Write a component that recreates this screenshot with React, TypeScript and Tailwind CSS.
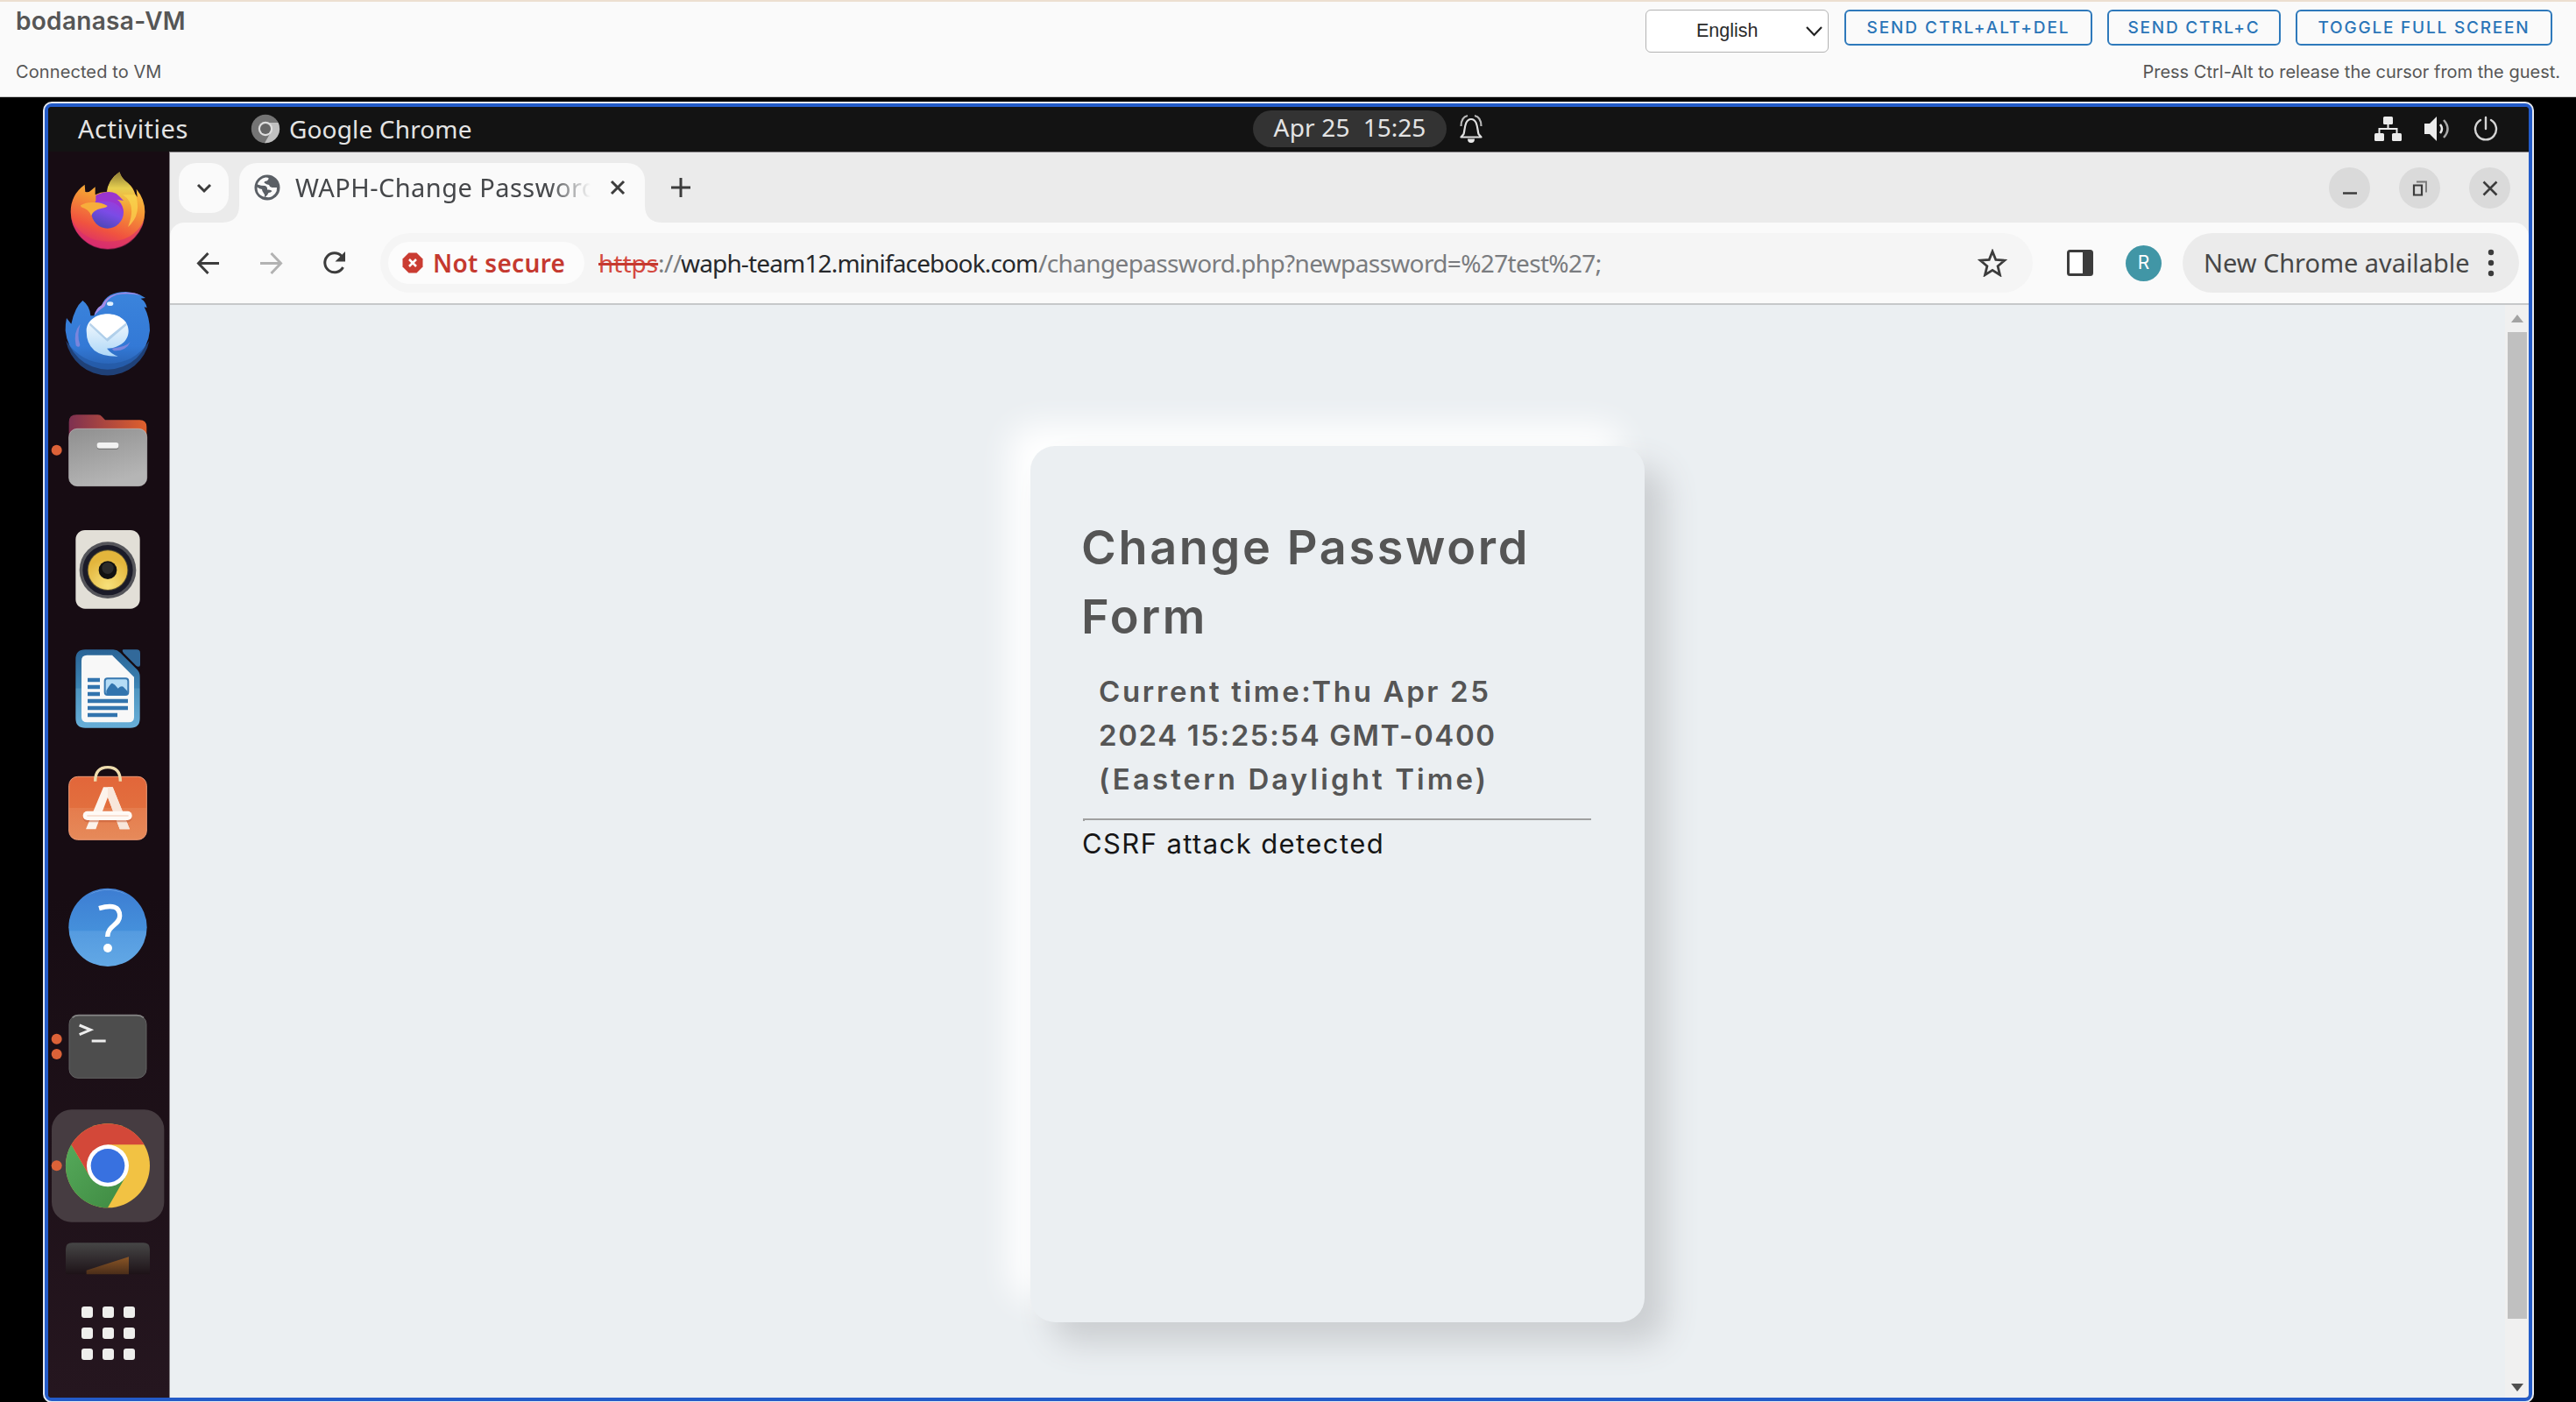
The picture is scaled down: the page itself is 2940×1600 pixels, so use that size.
import React from "react";

const ubuntu = "font-['Noto_Sans',sans-serif] whitespace-pre leading-[36px]";
const inter = "font-['Inter',sans-serif] whitespace-pre";

function HeaderButton({ label, className }: { label: string; className: string }) {
  return (
    <button className={`${inter} h-[41px] rounded-[6px] border-2 border-[#2e79bb] pt-px text-center text-[19px] leading-[36px] font-medium text-[#2a75b8] ${className}`}>
      {label}
    </button>
  );
}

function Header() {
  return (
    <header className="flex h-[111px] shrink-0 justify-between border-t-2 border-b border-t-[#ecdfd0] border-b-[#c4c4c4] bg-[#fafafa] pr-[18px] pl-[18px] text-[#565656]">
      <div className={inter}>
        <h1 className="mt-[4px] text-[28px] leading-[36px] font-semibold tracking-[0.3px]">bodanasa-VM</h1>
        <p className="mt-[26px] text-[20px] leading-[28px] tracking-[0.1px]">Connected to VM</p>
      </div>
      <div className="flex flex-col items-end">
        <div className="mt-[9px] mr-[9px] flex h-[50px] items-start">
          <div className="flex h-[49px] w-[209px] items-center justify-between rounded-[6px] border border-[#b3b3b3] bg-white pr-[6px] pl-[57px] font-['Liberation_Sans',sans-serif] text-[21.5px] text-[#2b2b2b]">
            English
            <svg width="19" height="12" viewBox="0 0 19 12" fill="none" stroke="#222" strokeWidth="2.2"><path d="M1 1l8.500 9L18 1" /></svg>
          </div>
          <HeaderButton label="SEND CTRL+ALT+DEL" className="ml-[18px] w-[283px] tracking-[1.95px]" />
          <HeaderButton label="SEND CTRL+C" className="ml-[17px] w-[198px] tracking-[1.8px]" />
          <HeaderButton label="TOGGLE FULL SCREEN" className="ml-[17px] w-[293px] tracking-[1.8px]" />
        </div>
        <p className={`${inter} mt-[7px] text-[20px] leading-[28px]`}>Press Ctrl-Alt to release the cursor from the guest.</p>
      </div>
    </header>
  );
}

function SystemBar() {
  return (
    <div className={`${ubuntu} flex h-[51px] shrink-0 items-center bg-[#131313] pb-[2px] text-[28px] text-[#e4e4e4]`}>
      <span className="ml-[34px] w-[197px] text-[29px] tracking-[0.5px]">Activities</span>
      <svg width="34" height="34" viewBox="0 0 34 34">
        <circle cx="17" cy="17" r="16.200" fill="#747474" />
        <path d="M17 10H31.500A16.200 16.200 0 0 1 16 33.200L23 21Z" fill="#c0c0c0" />
        <circle cx="17" cy="17" r="8.200" fill="#dedede" />
        <circle cx="17" cy="17" r="6" fill="#666666" />
      </svg>
      <span className="ml-[10px] w-[1100px] tracking-[0.15px]">Google Chrome</span>
      <div className="flex h-[42px] w-[221px] items-center justify-center rounded-full bg-[#333333] pb-[3px]">
        <span className="mr-[15px] tracking-[0.2px]">Apr 25</span>
        <span>15:25</span>
      </div>
      <svg className="ml-[14px]" width="28" height="34" viewBox="0 0 28 34" fill="none" stroke="#e0e0e0" strokeWidth="2.200">
        <path d="M2.500 26.500h23L22.500 23C21 18 21.500 6 14 6S7 18 5.500 23Z" strokeLinejoin="round" />
        <path d="M10 28.500h8q0 4.500-4 4.500t-4-4.500Z" fill="#e8e8e8" stroke="none" />
        <path d="M2.500 14C2.500 7 5.500 3 10 2M25.500 14C25.500 7 22.500 3 18 2" stroke="#b8b8b8" />
      </svg>
      <div className="mr-[35px] ml-auto flex items-center gap-[26px]">
        <svg width="31" height="28" viewBox="0 0 31 28" fill="#ebebeb">
          <rect x="10" y="0" width="11" height="9" rx="1.500" />
          <rect x="0" y="19" width="11" height="9" rx="1.500" />
          <rect x="20" y="19" width="11" height="9" rx="1.500" />
          <path d="M15.500 8v6M5.500 20v-6h20v6" fill="none" stroke="#ebebeb" strokeWidth="2" />
        </svg>
        <svg width="30" height="30" viewBox="0 0 30 30" fill="#ebebeb">
          <path d="M0 9h6l8-8v28l-8-8H0Z" />
          <path d="M18 10q4 5 0 10" fill="none" stroke="#ebebeb" strokeWidth="2.500" />
          <path d="M22 5q9 10 0 20" fill="none" stroke="#a8a8a8" strokeWidth="2.500" />
        </svg>
        <svg width="28" height="30" viewBox="0 0 28 30" fill="none" stroke="#d5d5d5" strokeWidth="2.400" strokeLinecap="round">
          <path d="M14 2v13M8 5a12 12 0 1 0 12 0" />
        </svg>
      </div>
    </div>
  );
}

function Slot({ y, h = 408, children }: { y: number; h?: number; children: React.ReactNode }) {
  return <svg className="block w-[138px] shrink-0" height={h / 3} viewBox={`45 ${y} 414 ${h}`}>{children}</svg>;
}

function Dock() {
  return (
    <nav className="flex w-[138px] shrink-0 flex-col bg-gradient-to-b from-[#170c13] from-60% to-[#25161f] pt-px">
      <svg className="absolute" width="0" height="0">
        <defs>
          <linearGradient id="fox" x1="0.7" y1="0" x2="0.35" y2="1"><stop offset="0" stopColor="#f8d849" /><stop offset="0.4" stopColor="#f59a35" /><stop offset="0.75" stopColor="#f0533f" /><stop offset="1" stopColor="#d92a70" /></linearGradient>
          <linearGradient id="flame" x1="0" y1="0" x2="0" y2="1"><stop offset="0" stopColor="#8c7a35" /><stop offset="0.4" stopColor="#e6cf4f" /><stop offset="1" stopColor="#f5a93a" stopOpacity="0" /></linearGradient>
          <linearGradient id="orb" x1="0.7" y1="0" x2="0.3" y2="1"><stop offset="0" stopColor="#a238d6" /><stop offset="0.5" stopColor="#7b4be6" /><stop offset="1" stopColor="#4a47b5" /></linearGradient>
          <linearGradient id="bird" x1="0" y1="0" x2="0" y2="1"><stop offset="0" stopColor="#3b84dc" /><stop offset="0.7" stopColor="#3379d6" /><stop offset="1" stopColor="#2860b0" /></linearGradient>
          <linearGradient id="mail" x1="0" y1="0" x2="0" y2="1"><stop offset="0" stopColor="#ffffff" /><stop offset="1" stopColor="#aed7f7" /></linearGradient>
          <linearGradient id="folder" x1="0" y1="0" x2="1" y2="0"><stop offset="0" stopColor="#7d3050" /><stop offset="1" stopColor="#e0602c" /></linearGradient>
          <linearGradient id="drawer" x1="0" y1="0" x2="0.4" y2="1"><stop offset="0" stopColor="#8f8f8f" /><stop offset="1" stopColor="#b5b5b5" /></linearGradient>
          <radialGradient id="cone" cx="0.5" cy="0.9" r="0.7"><stop offset="0" stopColor="#f7e07a" /><stop offset="1" stopColor="#e3b53c" /></radialGradient>
          <linearGradient id="doc" x1="0" y1="0" x2="0" y2="1"><stop offset="0" stopColor="#2a6496" /><stop offset="0.49" stopColor="#3d85b5" /><stop offset="0.5" stopColor="#4e95c0" /><stop offset="1" stopColor="#68afd9" /></linearGradient>
          <linearGradient id="bag" x1="0" y1="0" x2="0" y2="1"><stop offset="0" stopColor="#e2663a" /><stop offset="0.49" stopColor="#e26f3e" /><stop offset="0.5" stopColor="#e57c4d" /><stop offset="1" stopColor="#e68a5a" /></linearGradient>
          <linearGradient id="help" x1="0" y1="0" x2="0" y2="1"><stop offset="0" stopColor="#3d7dd2" /><stop offset="0.54" stopColor="#4590db" /><stop offset="0.55" stopColor="#559be0" /><stop offset="1" stopColor="#62a8e5" /></linearGradient>
          <linearGradient id="green" x1="0" y1="0" x2="1" y2="1"><stop offset="0" stopColor="#55a95a" /><stop offset="1" stopColor="#3f8a42" /></linearGradient>
          <linearGradient id="sublime" x1="0" y1="0" x2="0" y2="1"><stop offset="0" stopColor="#464646" /><stop offset="1" stopColor="#1d1217" /></linearGradient>
          <linearGradient id="amber" x1="0" y1="0" x2="0" y2="1"><stop offset="0" stopColor="#8a5626" /><stop offset="1" stopColor="#4a2d19" /></linearGradient>
        </defs>
      </svg>

      <Slot y={45}>
        <path d="M170 155L172 180Q184 182 190 176L206 163L206 190Q228 178 248 180Q250 138 289 112Q296 135 318 150Q336 164 344 190L350 198L347 170Q376 205 376 248A127 127 0 0 1 122 248Q122 190 170 155Z" fill="url(#fox)" />
        <path d="M244 185Q250 138 289 112Q296 135 318 150Q350 185 350 250L300 250Z" fill="url(#flame)" />
        <path d="M124 270A127 127 0 0 0 374 275Q340 350 250 350Q160 350 124 270Z" fill="#d52c72" opacity="0.55" />
        <path d="M345 190Q366 260 318 300Q350 220 300 190Z" fill="#fbd84e" opacity="0.7" />
        <circle cx="248" cy="250" r="55" fill="url(#orb)" />
        <path d="M208 192Q250 172 278 186Q288 194 303 210L280 206Q300 225 302 250Q280 200 208 215Z" fill="#9a35cf" />
        <path d="M156 226Q176 214 200 216Q225 214 248 228Q244 234 228 236Q198 242 192 262Q186 240 158 232Z" fill="#f7ad3b" />
      </Slot>

      <Slot y={453}>
        <path d="M163 552Q188 570 190 604L202 604Q208 580 228 568Q246 522 310 522Q350 524 378 543L362 545Q380 556 383 577L374 574Q393 612 393 655A145 145 0 0 1 104 655Q104 630 108 612Q114 620 124 632Q136 575 163 552Z" fill="url(#bird)" />
        <path d="M106 690A145 145 0 0 0 391 690Q340 768 250 768Q160 768 106 690Z" fill="#2459a4" opacity="0.7" />
        <path d="M203 604Q208 580 228 568Q250 526 310 524Q345 524 362 534Q320 525 280 532Q245 545 238 572Q212 590 203 604Z" fill="#a48ae6" />
        <path d="M155 632Q130 660 140 706Q150 716 154 704Q142 670 155 632Z" fill="#7a86dd" />
        <path d="M262 716Q310 712 326 694Q312 726 270 724Z" fill="#7a86dd" />
        <path d="M248 598C290 598 320 624 320 656C320 690 290 714 246 716Q262 736 284 743Q176 745 176 656C176 624 206 598 248 598Z" fill="url(#mail)" />
        <path d="M190 626L246 682L310 626L314 636L248 692Q244 690 186 636Z" fill="#8fb8dd" opacity="0.55" />
        <path d="M188 628Q210 599 248 599Q290 599 312 628L250 678Q246 681 242 678Z" fill="#fff" />
        <ellipse cx="257" cy="563" rx="11" ry="7" fill="#dff0ff" />
      </Slot>

      <Slot y={861}>
        <path d="M116 1030V968Q116 943 142 943H215Q224 943 230 950L240 961H358Q382 961 382 985V1030Z" fill="url(#folder)" />
        <rect x="116" y="991" width="267" height="196" rx="28" fill="url(#drawer)" stroke="#c0c0c0" strokeWidth="2" />
        <rect x="212" y="1042" width="74" height="20" rx="8" fill="#777" />
        <rect x="212" y="1038" width="74" height="20" rx="8" fill="#f2f2f2" />
        <circle cx="74" cy="1064" r="18" fill="#dc6238" />
      </Slot>

      <Slot y={9}>
        <rect x="139" y="78" width="220" height="269" rx="32" fill="#e2dfd7" />
        <circle cx="249" cy="215" r="97" fill="#55555a" />
        <circle cx="249" cy="215" r="86" fill="#1b1b28" />
        <circle cx="249" cy="215" r="70" fill="#5b5230" />
        <circle cx="249" cy="215" r="67" fill="url(#cone)" />
        <circle cx="249" cy="215" r="31" fill="#111" />
        <circle cx="249" cy="208" r="20" fill="#2b2b2b" />
      </Slot>

      <Slot y={417}>
        <path d="M172 487H268Q282 488 292 498L350 556Q359 565 359 580V722Q359 755 326 755H172Q139 755 139 722V520Q139 487 172 487Z" fill="url(#doc)" />
        <path d="M178 506H264L339 581V718Q339 736 321 736H178Q159 736 159 718V525Q159 506 178 506Z" fill="#f8f8f8" />
        <path d="M296 485L362 553" stroke="#170c13" strokeWidth="14" />
        <path d="M302 487H348Q360 487 360 499V540Q358 550 346 542L303 499Q296 489 302 487Z" fill="#32699a" />
        <path d="M180 591H222M180 615H222M180 639H222M180 663H318M180 687H318M180 711H282" stroke="#3274ae" strokeWidth="13" strokeLinecap="butt" />
        <rect x="239" y="586" width="80" height="56" rx="9" fill="#b5dcf6" stroke="#3677b0" strokeWidth="6" />
        <path d="M244 640V628Q258 602 264 602Q272 604 284 620Q294 610 302 614L317 630V640Z" fill="#3274ae" />
      </Slot>

      <Slot y={825}>
        <rect x="116" y="922" width="266" height="216" rx="30" fill="url(#bag)" stroke="#ef9a75" strokeWidth="3" />
        <path d="M206 938Q206 890 249 890T292 938" fill="none" stroke="#eedcae" strokeWidth="10" />
        <path d="M234 958H266L324 1102H290L249 992L208 1102H174Z" fill="#fcf3ec" />
        <path d="M249 958H266L324 1102H290L249 992Z" fill="#f8e6da" />
        <rect x="164" y="1046" width="168" height="32" rx="16" fill="#c25a35" opacity="0.5" />
        <rect x="164" y="1040" width="168" height="31" rx="15" fill="#fffaf6" />
        <path d="M178 1056H320" stroke="#f6d9ca" strokeWidth="5" />
      </Slot>

      <Slot y={-27}>
        <circle cx="249" cy="178" r="134" fill="url(#help)" />
        <path d="M180 68A134 134 0 0 1 318 68Q249 32 180 68Z" fill="#8fb9ea" />
        <path d="M219 113Q290 92 290 139C290 170 248 172 248 210" fill="none" stroke="#fff" strokeWidth="16" />
        <circle cx="249" cy="249" r="15" fill="#fff" />
      </Slot>

      <Slot y={381}>
        <rect x="117" y="479" width="264" height="215" rx="30" fill="#4d4d4d" stroke="#626262" strokeWidth="3" />
        <path d="M128 487Q136 479 150 479H348Q362 479 372 487" fill="none" stroke="#858585" strokeWidth="5" />
        <path d="M152 513L190 529L152 545" fill="none" stroke="#eeeeee" strokeWidth="9" />
        <path d="M194 567H242" stroke="#eeeeee" strokeWidth="9" />
        <circle cx="74" cy="560" r="18" fill="#dc6238" />
        <circle cx="74" cy="612" r="18" fill="#dc6238" />
      </Slot>

      <Slot y={39}>
        <rect x="57" y="52" width="385" height="385" rx="68" fill="#463c41" />
        <circle cx="249" cy="244" r="144" fill="#f2c243" />
        <path d="M124 172A144 144 0 0 0 249 388L311 280L187 280Z" fill="url(#green)" />
        <path d="M124 172A144 144 0 0 1 374 172H249L187 280Z" fill="#d34839" />
        <circle cx="249" cy="244" r="72" fill="#fff" />
        <circle cx="249" cy="244" r="58" fill="#3871e0" />
        <circle cx="74" cy="244" r="18" fill="#dc6238" />
      </Slot>

      <Slot y={447} h={192}>
        <path d="M105 616V530Q105 508 127 508H371Q393 508 393 530V616Z" fill="url(#sublime)" />
        <path d="M176 616V602L321 556V616Z" fill="url(#amber)" />
      </Slot>

      <div className="mt-[29px] -ml-[2px] grid grid-cols-[repeat(3,13px)] justify-center gap-[11px]">
        {Array.from({ length: 9 }, (_, i) => <span key={i} className="size-[13px] rounded-[3px] bg-[#eeeeec]" />)}
      </div>
    </nav>
  );
}

function WindowButton({ children }: { children: React.ReactNode }) {
  return (
    <div className="flex size-[47px] items-center justify-center rounded-full bg-[#dadada]">
      <svg width="20" height="20" viewBox="0 0 20 20" fill="none" stroke="#3c3c3c" strokeWidth="2.500">{children}</svg>
    </div>
  );
}

function TabStrip() {
  return (
    <div className="flex h-[80px] shrink-0 items-end bg-[#ebebeb]">
      <div className="mb-[11px] ml-[10px] flex h-[57px] w-[57px] items-center justify-center rounded-[20px] bg-[#fafafa]">
        <svg width="18" height="12" viewBox="0 0 18 12" fill="none" stroke="#3c3c3c" strokeWidth="3"><path d="M2 2l7 7 7-7" /></svg>
      </div>
      <svg className="-ml-[8px] shrink-0" width="20" height="20" viewBox="0 0 20 20"><path d="M20 0V20H0Q20 20 20 0Z" fill="#fafafa" /></svg>
      <div className="flex h-[68px] w-[463px] items-center rounded-t-[20px] bg-[#fafafa] pb-[13px] pl-[17px]">
        <svg width="30" height="30" viewBox="0 0 30 30">
          <circle cx="15" cy="15" r="14.500" fill="#5a5f65" />
          <path d="M13 3.500Q6 5 3.800 11.500Q8 13 12.500 13Q15.500 14 15 17.500Q19 17 20.500 19Q19 21 16.500 21Q15.500 24 12.500 25.500Q19 28 24 22Q26.500 18.500 26 15L20.500 15Q17.500 14.500 17 12Q14 11.500 11.500 9.500Q11.500 7.500 14.500 7.500Q17 6 16.500 4Q15 3.300 13 3.500ZM3.600 14.500Q3 20 7 23.500Q9.500 25.500 12 25.800Q12.500 23 11 21.500Q9 19.500 9 17Q6 16.500 3.600 14.500Z" fill="#fafafa" />
        </svg>
        <div className={`${ubuntu} ml-[17px] w-[337px] overflow-hidden text-[29px] tracking-[0.45px] text-[#45474a] [mask-image:linear-gradient(to_right,black_86%,transparent_100%)]`}>WAPH-Change Password</div>
        <svg className="ml-[22px]" width="18" height="18" viewBox="0 0 18 18" fill="none" stroke="#3c3c3c" strokeWidth="3"><path d="M2 2l14 14M16 2L2 16" /></svg>
      </div>
      <svg className="shrink-0" width="20" height="20" viewBox="0 0 20 20"><path d="M0 0V20H20Q0 20 0 0Z" fill="#fafafa" /></svg>
      <svg className="mb-[28px] ml-[9px]" width="24" height="24" viewBox="0 0 24 24" fill="none" stroke="#3c3c3c" strokeWidth="3"><path d="M12 1v22M1 12h22" /></svg>
      <div className="mr-[21px] mb-[16px] ml-auto flex gap-[33px]">
        <WindowButton><path d="M2 15.500h16" /></WindowButton>
        <WindowButton><path d="M3 6.500h9v11H3Z" strokeWidth="2.200" /><path d="M6 2.500h11v12" strokeWidth="1.800" stroke="#777" /></WindowButton>
        <WindowButton><path d="M2.500 2.500l15 15M17.500 2.500l-15 15" /></WindowButton>
      </div>
    </div>
  );
}

function Toolbar() {
  return (
    <div className="shrink-0 bg-[#ebebeb]">
      <div className={`${ubuntu} flex h-[94px] items-center rounded-t-[16px] border-b-2 border-[#c6c8ca] bg-[#fafafa] text-[28px]`}>
        <svg className="ml-[30px]" width="27" height="27" viewBox="0 0 27 27" fill="none" stroke="#3c3c3c" strokeWidth="3"><path d="M13.500 2L2.500 13.500l11 11.500M3 13.500h23" /></svg>
        <svg className="ml-[45px]" width="27" height="27" viewBox="0 0 27 27" fill="none" stroke="#b2b2b2" strokeWidth="3"><path d="M13.500 2l11 11.500-11 11.500M24 13.500H1" /></svg>
        <svg className="ml-[45px]" width="28" height="28" viewBox="0 0 28 28"><path d="M23.500 19A11 11 0 1 1 22 6.500" fill="none" stroke="#3c3c3c" strokeWidth="3" /><path d="M26 1v11.500H14.500Z" fill="#3c3c3c" /></svg>
        <div className="ml-[38px] flex h-[68px] w-[1886px] items-center rounded-full bg-[#f5f5f5] pl-[9px]">
          <div className="flex h-[48px] w-[224px] items-center rounded-full bg-[#fcfcfc] pl-[16px] text-[#c5392f]">
            <svg width="24" height="24" viewBox="0 0 24 24"><path d="M7.500 0.500h9l7 7v9l-7 7h-9l-7-7v-9Z" fill="#ca3c32" /><path d="M8 8l8 8M16 8l-8 8" stroke="#fff" strokeWidth="2.500" /></svg>
            <span className="ml-[11px] font-semibold tracking-[0.3px]">Not secure</span>
          </div>
          <div className="ml-[16px] flex text-[#7a7c7f]">
            <span className="w-[68px] text-[#d4493e] line-through decoration-[#c5392f] decoration-[2.5px]">https</span>
            <span className="w-[26px] tracking-[-0.5px]">://</span>
            <span className="w-[408px] tracking-[-0.85px] text-[#26282b]">waph-team12.minifacebook.com</span>
            <span className="tracking-[-0.65px]">/changepassword.php?newpassword=%27test%27;</span>
          </div>
          <svg className="mr-[29px] ml-auto" width="34" height="32" viewBox="0 0 34 32"><path d="M17 3l3.800 9.400 10 .8-7.700 6.600 2.400 9.900L17 24.400 8.500 29.700l2.400-9.900-7.700-6.600 10-.8Z" fill="none" stroke="#3c3c3c" strokeWidth="2.800" /></svg>
        </div>
        <svg className="ml-[39px]" width="30" height="30" viewBox="0 0 30 30"><rect x="1.500" y="1.500" width="27" height="27" rx="2" fill="#fff" stroke="#3c3c3c" strokeWidth="3" /><path d="M18 1h11v28H18Z" fill="#3c3c3c" /></svg>
        <div className="ml-[37px] flex size-[41px] items-center justify-center rounded-full bg-[#4196a6] font-['Inter',sans-serif] text-[21px] text-white">R</div>
        <div className="ml-[24px] flex h-[68px] w-[384px] items-center rounded-full bg-[#ebebeb] pl-[24px] text-[#474747]">
          <span className="w-[324px] text-[29px] tracking-[-0.05px]">New Chrome available</span>
          <svg width="8" height="32" viewBox="0 0 8 32" fill="#3c3c3c"><circle cx="4" cy="4" r="3.200" /><circle cx="4" cy="16" r="3.200" /><circle cx="4" cy="28" r="3.200" /></svg>
        </div>
      </div>
    </div>
  );
}

function Page() {
  return (
    <div className="flex min-h-0 flex-1">
      <main className="flex min-w-0 flex-1 items-start justify-center overflow-hidden bg-[#ebeff2] pt-[161px]">
        <section className={`${inter} h-[1000px] w-[701px] rounded-[28px] bg-[#ebeff2] px-[59px] pt-[77px] shadow-[24px_24px_37px_#cbced1,-24px_-24px_37px_#ffffff]`}>
          <h1 className="text-[54px] leading-[78.500px] font-semibold tracking-[2.65px] text-[#555555]">
            <span className="-ml-px block">Change Password</span>
            <span className="-ml-px block">Form</span>
          </h1>
          <div className="mt-[21px] pl-[19px] text-[33px] leading-[50px] font-semibold text-[#555555]">
            <span className="block tracking-[2.650px]">Current time:Thu Apr 25</span>
            <span className="block tracking-[1.600px]">2024 15:25:54 GMT-0400</span>
            <span className="block tracking-[3.100px]">(Eastern Daylight Time)</span>
          </div>
          <div className="mt-[20px] mr-[2px] ml-px h-[3px] border-t-2 border-l-2 border-[#a0a0a0]" />
          <p className="mt-[3px] text-[31px] leading-[46px] tracking-[1.400px] text-[#161616]">CSRF attack detected</p>
        </section>
      </main>
      <div className="flex w-[27px] shrink-0 flex-col items-center bg-[#f0f0f0]">
        <svg className="mt-[11px]" width="14" height="9" viewBox="0 0 14 9"><path d="M0 9L7 0l7 9Z" fill="#a3a3a3" /></svg>
        <div className="mt-[11px] h-[1126px] w-[22px] bg-[#c0c0c0]" />
        <svg className="mt-[74px]" width="14" height="9" viewBox="0 0 14 9"><path d="M0 0h14L7 9Z" fill="#505050" /></svg>
      </div>
    </div>
  );
}

export default function App() {
  return (
    <div className="flex h-[1600px] w-[2940px] flex-col overflow-hidden bg-black">
      <Header />
      <div className="mt-[5px] ml-[49px] h-[1485px] w-[2843px] shrink-0 rounded-[10px] bg-[#e4e8f0] p-[2px]">
        <div className="flex h-full flex-col overflow-hidden rounded-[8px] border-4 border-[#235bc8] bg-[#131313]">
          <SystemBar />
          <div className="flex min-h-0 flex-1">
            <Dock />
            <div className="flex min-w-0 flex-1 flex-col border-t border-l border-[#858085]">
              <TabStrip />
              <Toolbar />
              <Page />
            </div>
          </div>
        </div>
      </div>
    </div>
  );
}
